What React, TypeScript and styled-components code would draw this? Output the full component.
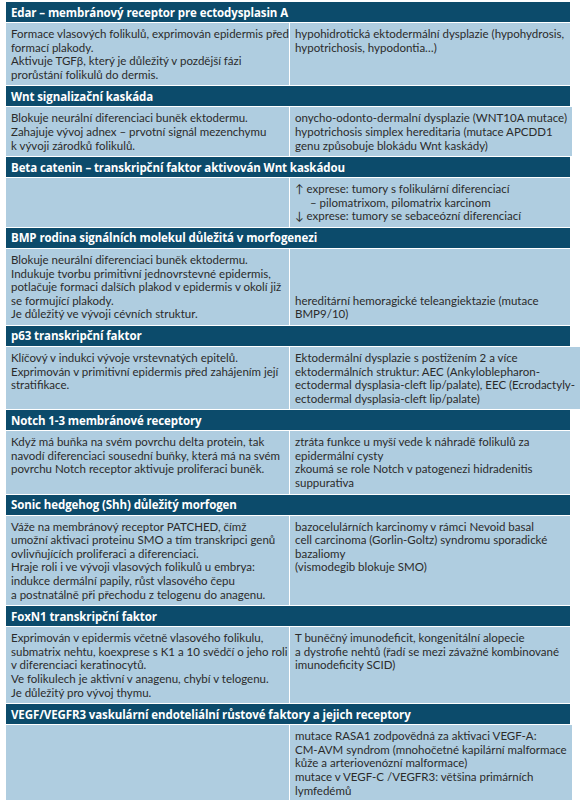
import styled, { createGlobalStyle } from 'styled-components'

const GlobalStyle = createGlobalStyle`
  html, body { margin: 0; padding: 0; background: #ffffff; }
  body { font-family: Lato, "Noto Sans", sans-serif; }
`

const HeaderColor = '#0c4b6b'
const CellColor = '#afcde0'
const TextColor = '#2b2b2b'

// a line starting with '>' is indented under the previous one
type Section = {
  title: string
  left: string[]
  right: string[]
  rightOffset?: number
}

const sections: Section[] = [
  {
    title: 'Edar – membránový receptor pre ectodysplasin A',
    left: [
      'Formace vlasových folikulů, exprimován epidermis před',
      'formací plakody.',
      'Aktivuje TGFβ, který je důležitý v pozdější fázi',
      'prorůstání folikulů do dermis.',
    ],
    right: [
      'hypohidrotická ektodermální dysplazie (hypohydrosis,',
      'hypotrichosis, hypodontia…)',
    ],
  },
  {
    title: 'Wnt signalizační kaskáda',
    left: [
      'Blokuje neurální diferenciaci buněk ektodermu.',
      'Zahajuje vývoj adnex – prvotní signál mezenchymu',
      'k vývoji zárodků folikulů.',
    ],
    right: [
      'onycho-odonto-dermalní dysplazie (WNT10A mutace)',
      'hypotrichosis simplex hereditaria (mutace APCDD1',
      'genu způsobuje blokádu Wnt kaskády)',
    ],
  },
  {
    title: 'Beta catenin – transkripční faktor aktivován Wnt kaskádou',
    left: [],
    right: [
      '↑ exprese: tumory s folikulární diferenciací',
      '>– pilomatrixom, pilomatrix karcinom',
      '↓ exprese: tumory se sebaceózní diferenciací',
    ],
  },
  {
    title: 'BMP rodina signálních molekul důležitá v morfogenezi',
    left: [
      'Blokuje neurální diferenciaci buněk ektodermu.',
      'Indukuje tvorbu primitivní jednovrstevné epidermis,',
      'potlačuje formaci dalších plakod v epidermis v okolí již',
      'se formující plakody.',
      'Je důležitý ve vývoji cévních struktur.',
    ],
    right: [
      'hereditární hemoragické teleangiektazie (mutace',
      'BMP9/10)',
    ],
    rightOffset: 3,
  },
  {
    title: 'p63 transkripční faktor',
    left: [
      'Klíčový v indukci vývoje vrstevnatých epitelů.',
      'Exprimován v primitivní epidermis před zahájením její',
      'stratifikace.',
    ],
    right: [
      'Ektodermální dysplazie s postižením 2 a více',
      'ektodermálních struktur: AEC (Ankyloblepharon-',
      'ectodermal dysplasia-cleft lip/palate), EEC (Ecrodactyly-',
      'ectodermal dysplasia-cleft lip/palate)',
    ],
  },
  {
    title: 'Notch 1-3 membránové receptory',
    left: [
      'Když má buňka na svém povrchu delta protein, tak',
      'navodí diferenciaci sousední buňky, která má na svém',
      'povrchu Notch receptor aktivuje proliferaci buněk.',
    ],
    right: [
      'ztráta funkce u myší vede k náhradě folikulů za',
      'epidermální cysty',
      'zkoumá se role Notch v patogenezi hidradenitis',
      'suppurativa',
    ],
  },
  {
    title: 'Sonic hedgehog (Shh) důležitý morfogen',
    left: [
      'Váže na membránový receptor PATCHED, čímž',
      'umožní aktivaci proteinu SMO a tím transkripci genů',
      'ovlivňujících proliferaci a diferenciaci.',
      'Hraje roli i ve vývoji vlasových folikulů u embrya:',
      'indukce dermální papily, růst vlasového čepu',
      'a postnatálně při přechodu z telogenu do anagenu.',
    ],
    right: [
      'bazocelulárních karcinomy v rámci Nevoid basal',
      'cell carcinoma (Gorlin-Goltz) syndromu sporadické',
      'bazaliomy',
      '(vismodegib blokuje SMO)',
    ],
  },
  {
    title: 'FoxN1 transkripční faktor',
    left: [
      'Exprimován v epidermis včetně vlasového folikulu,',
      'submatrix nehtu, koexprese s K1 a 10 svědčí o jeho roli',
      'v diferenciaci keratinocytů.',
      'Ve folikulech je aktivní v anagenu, chybí v telogenu.',
      'Je důležitý pro vývoj thymu.',
    ],
    right: [
      'T buněčný imunodeficit, kongenitální alopecie',
      'a dystrofie nehtů (řadí se mezi závažné kombinované',
      'imunodeficity SCID)',
    ],
  },
  {
    title: 'VEGF/VEGFR3 vaskulární endoteliální růstové faktory a jejich receptory',
    left: [],
    right: [
      'mutace RASA1 zodpovědná za aktivaci VEGF-A:',
      'CM-AVM syndrom (mnohočetné kapilární malformace',
      'kůže a arteriovenózní malformace)',
      'mutace v VEGF-C /VEGFR3: většina primárních',
      'lymfedémů',
    ],
  },
]

const Table = styled.div`
  width: 564px;
  margin: 2px 0 0 6px;
  display: flex;
  flex-direction: column;
  gap: 1px;
  background: #ffffff;
`

const SectionBlock = styled.div`
  display: flex;
  flex-direction: column;
  gap: 1px;
`

const HeaderRow = styled.div`
  height: 20px;
  display: flex;
  align-items: center;
  padding: 0 5px;
  background: ${HeaderColor};
  color: #ffffff;
  font-family: "Open Sans", "Noto Sans", sans-serif;
  font-weight: 700;
  font-size: 11.5px;
  letter-spacing: -0.1px;
  white-space: nowrap;
`

const BodyRow = styled.div`
  display: grid;
  grid-template-columns: 283px 1fr;
  column-gap: 1px;
  background: #ffffff;
`

const Cell = styled.div<{ $offset?: number }>`
  background: ${CellColor};
  color: ${TextColor};
  font-size: 11.5px;
  line-height: 13.6px;
  padding: 4px 5px;
  padding-top: ${(p) => 4 + (p.$offset || 0) * 13.6}px;
  min-height: 13.6px;
`

const Line = styled.div<{ $indent?: boolean }>`
  white-space: nowrap;
  padding-left: ${(p) => (p.$indent ? '15px' : '0')};
`

function CellLines({ lines }: { lines: string[] }) {
  return <>
    {lines.map((l, i) => l.startsWith('>')
      ? <Line key={i} $indent>{l.slice(1)}</Line>
      : <Line key={i}>{l}</Line>)}
  </>
}

export default function App() {
  return <>
    <GlobalStyle />
    <Table>
      {sections.map((s) => <SectionBlock key={s.title}>
        <HeaderRow>{s.title}</HeaderRow>
        <BodyRow>
          <Cell><CellLines lines={s.left} /></Cell>
          <Cell $offset={s.rightOffset}><CellLines lines={s.right} /></Cell>
        </BodyRow>
      </SectionBlock>)}
    </Table>
  </>
}
